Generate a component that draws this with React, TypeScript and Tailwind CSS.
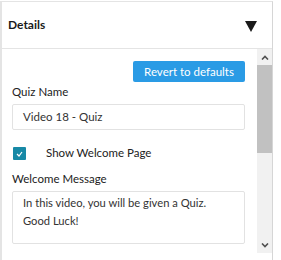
import React from "react";

export default function App() {
  return (
    <div className="w-[281px] h-[260px] bg-white overflow-hidden" style={{ fontFamily: "Lato, 'Open Sans', sans-serif" }}>
      <div className="mt-px w-[273px] h-[259px] border-l-2 border-t border-r border-l-[#e4e4e4] border-t-[#e4e4e4] border-r-[#d6d6d6] flex flex-col">
        <div className="h-[47px] flex items-center justify-between pl-[6px] pr-[15px] border-b border-[#e4e4e4] shrink-0">
          <span className="text-[12px] font-bold text-[#1a1a1a]">Details</span>
          <svg width="12" height="12" viewBox="0 0 12 12" className="translate-y-[1px]">
            <polygon points="0,1 12,1 6,12" fill="#1a1a1a" />
          </svg>
        </div>
        <div className="h-[204px] flex shrink-0">
          <div className="flex-1 pl-[10px] pr-[12px] pt-[12px] flex flex-col">
            <div className="flex justify-end">
              <button className="w-[112px] h-[21px] bg-[#2a9be5] text-white text-[11.5px] rounded-[2px] leading-none">
                Revert to defaults
              </button>
            </div>
            <label className="mt-[3px] text-[11.5px] text-[#222] leading-[14px]">Quiz Name</label>
            <div className="mt-[5px] h-[26px] border border-[#e2e2e2] rounded-[2px] flex items-center pl-[10px] text-[11.5px] text-[#333]">
              Video 18 - Quiz
            </div>
            <div className="mt-[17px] flex items-center h-[13px]">
              <span className="ml-[1px] w-[13px] h-[13px] bg-[#1789a6] rounded-[1px] flex items-center justify-center">
                <svg width="7" height="6" viewBox="0 0 7 6">
                  <polyline points="1,3 3,5 6,1" fill="none" stroke="white" strokeWidth="1.2" />
                </svg>
              </span>
              <span className="ml-[20px] text-[11.5px] text-[#222] leading-[13px] -translate-y-[1px]">Show Welcome Page</span>
            </div>
            <label className="mt-[12px] text-[11.5px] text-[#222] leading-[14px]">Welcome Message</label>
            <div className="mt-[5px] h-[53px] border border-[#e2e2e2] rounded-[2px] pl-[10px] pt-[2px] text-[11.2px] leading-[18px] text-[#333]">
              In this video, you will be given a Quiz.
              <br />
              Good Luck!
            </div>
          </div>
          <div className="w-[15px] bg-[#f1f1f1] flex flex-col items-center">
            <div className="h-[16px] flex items-center justify-center">
              <svg width="8" height="5" viewBox="0 0 8 5">
                <polyline points="1,4.5 4,1.5 7,4.5" fill="none" stroke="#505050" strokeWidth="1.6" />
              </svg>
            </div>
            <div className="w-[15px] h-[88px] bg-[#c1c1c1]" />
            <div className="flex-1" />
            <div className="h-[16px] flex items-center justify-center">
              <svg width="8" height="5" viewBox="0 0 8 5">
                <polyline points="1,0.5 4,3.5 7,0.5" fill="none" stroke="#505050" strokeWidth="1.6" />
              </svg>
            </div>
          </div>
        </div>
      </div>
    </div>
  );
}
